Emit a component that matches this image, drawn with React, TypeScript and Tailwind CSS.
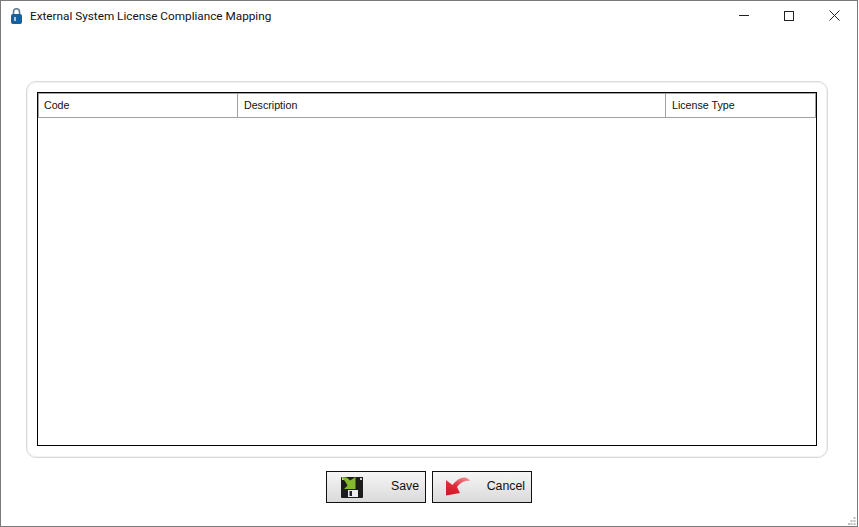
const titleFont = { fontFamily: 'Roboto, "Liberation Sans", sans-serif' };
const bodyFont = { fontFamily: '"Liberation Sans", Arial, sans-serif' };

function SaveIcon() {
  return (
    <svg width="23" height="22" viewBox="0 0 23 22">
      <path d="M0 1h22v20a1 1 0 0 1-1 1H1a1 1 0 0 1-1-1z" fill="#1c1c1c" />
      <rect x="1" y="2" width="2" height="2" fill="#c8c8c8" />
      <rect x="19" y="2" width="2" height="2" fill="#d0d0d0" />
      <rect x="7" y="14" width="10" height="7" fill="#ececec" />
      <rect x="8.500" y="15" width="2.500" height="5" fill="#222" />
      <path d="M0 1c4-.5 7 .5 9 3.500L14.500 1v12H3l3.500-3.500C5 6.500 3 3 0 1z" fill="#86b82f" />
    </svg>
  );
}

function CancelIcon() {
  return (
    <svg width="25" height="19" viewBox="0 0 25 19">
      <defs>
        <linearGradient id="cancel" x1="0.6" y1="0" x2="0.2" y2="1">
          <stop offset="0" stopColor="#ee7f86" />
          <stop offset="0.45" stopColor="#e02c3a" />
          <stop offset="1" stopColor="#cf1626" />
        </linearGradient>
      </defs>
      <path d="M0 3l6.500 5C10 3 15 0 19 .5c2 .5 4 1.500 5 3.500-5-1-10 2-13 6l3 6-14 2.500z" fill="url(#cancel)" />
    </svg>
  );
}

function FooterButton({ label, icon, iconClass }: { label: string; icon: React.ReactNode; iconClass: string }) {
  return (
    <button
      className="relative flex h-8 w-[100px] items-center justify-end border border-[#111] bg-gradient-to-b from-[#f6f6f6] to-[#dadada] pr-[6px] pb-[2px] text-[12.300px] text-[#111]"
      style={bodyFont}
    >
      <span className={iconClass}>{icon}</span>
      {label}
    </button>
  );
}

export default function App() {
  return (
    <div className="h-[527px] w-[859px] overflow-hidden bg-white" style={titleFont}>
      <div className="flex h-[527px] w-[858px] flex-col border border-[#7a7a7a]">
        <div className="flex h-[30px] items-center pl-[10px]">
          <svg width="11" height="16" viewBox="0 0 11 16" className="mr-[8px]">
            <path d="M2.500 7V3.800a3 3 0 0 1 6 0V7" fill="none" stroke="#60788c" strokeWidth="1.600" />
            <rect x="0" y="6" width="11" height="10" rx="2" fill="#15609e" />
            <rect x="3" y="9" width="2" height="4" fill="#a9c8e2" />
          </svg>
          <span className="pt-px text-[11.750px] text-[#111]">External System License Compliance Mapping</span>
          <div className="ml-auto mr-[17px] -mt-px flex items-center gap-[35px]">
            <div className="h-px w-[10px] bg-[#222]" />
            <div className="h-[10px] w-[10px] border border-[#222]" />
            <svg width="11" height="11" viewBox="0 0 11 11">
              <path d="M.500.500l10 10M10.500.500l-10 10" stroke="#222" fill="none" />
            </svg>
          </div>
        </div>
        <div className="ml-[25px] mt-[50px] flex h-[377px] w-[802px] rounded-[10px] border border-[#dadada] p-[10px] shadow-[inset_0_0_0_1px_#f2f2f2]">
          <div className="flex h-[354px] w-[780px] flex-col border border-black">
            <div
              className="flex h-[25px] border border-[#a0a0a0] text-[10.670px] leading-[23px] text-[#111]"
              style={bodyFont}
            >
              <div className="w-[199px] border-r border-[#a0a0a0] pl-[5px]">Code</div>
              <div className="w-[428px] border-r border-[#a0a0a0] pl-[6px]">Description</div>
              <div className="flex-1 pl-[6px]">License Type</div>
            </div>
          </div>
        </div>
        <div className="mt-[13px] flex justify-center gap-[6px]">
          <FooterButton label="Save" icon={<SaveIcon />} iconClass="absolute left-[14px] top-[4px]" />
          <FooterButton label="Cancel" icon={<CancelIcon />} iconClass="absolute left-[13px] top-[5px]" />
        </div>
        <div className="relative flex-1">
          <svg width="8" height="8" viewBox="0 0 8 8" className="absolute bottom-[1px] right-[1px]" fill="#bdbdbd">
            <rect x="5.500" y="0" width="2" height="2" />
            <rect x="2.500" y="3" width="2" height="2" />
            <rect x="5.500" y="3" width="2" height="2" />
            <rect x="0" y="6" width="2" height="2" />
            <rect x="2.500" y="6" width="2" height="2" />
            <rect x="5.500" y="6" width="2" height="2" />
          </svg>
        </div>
      </div>
    </div>
  );
}
